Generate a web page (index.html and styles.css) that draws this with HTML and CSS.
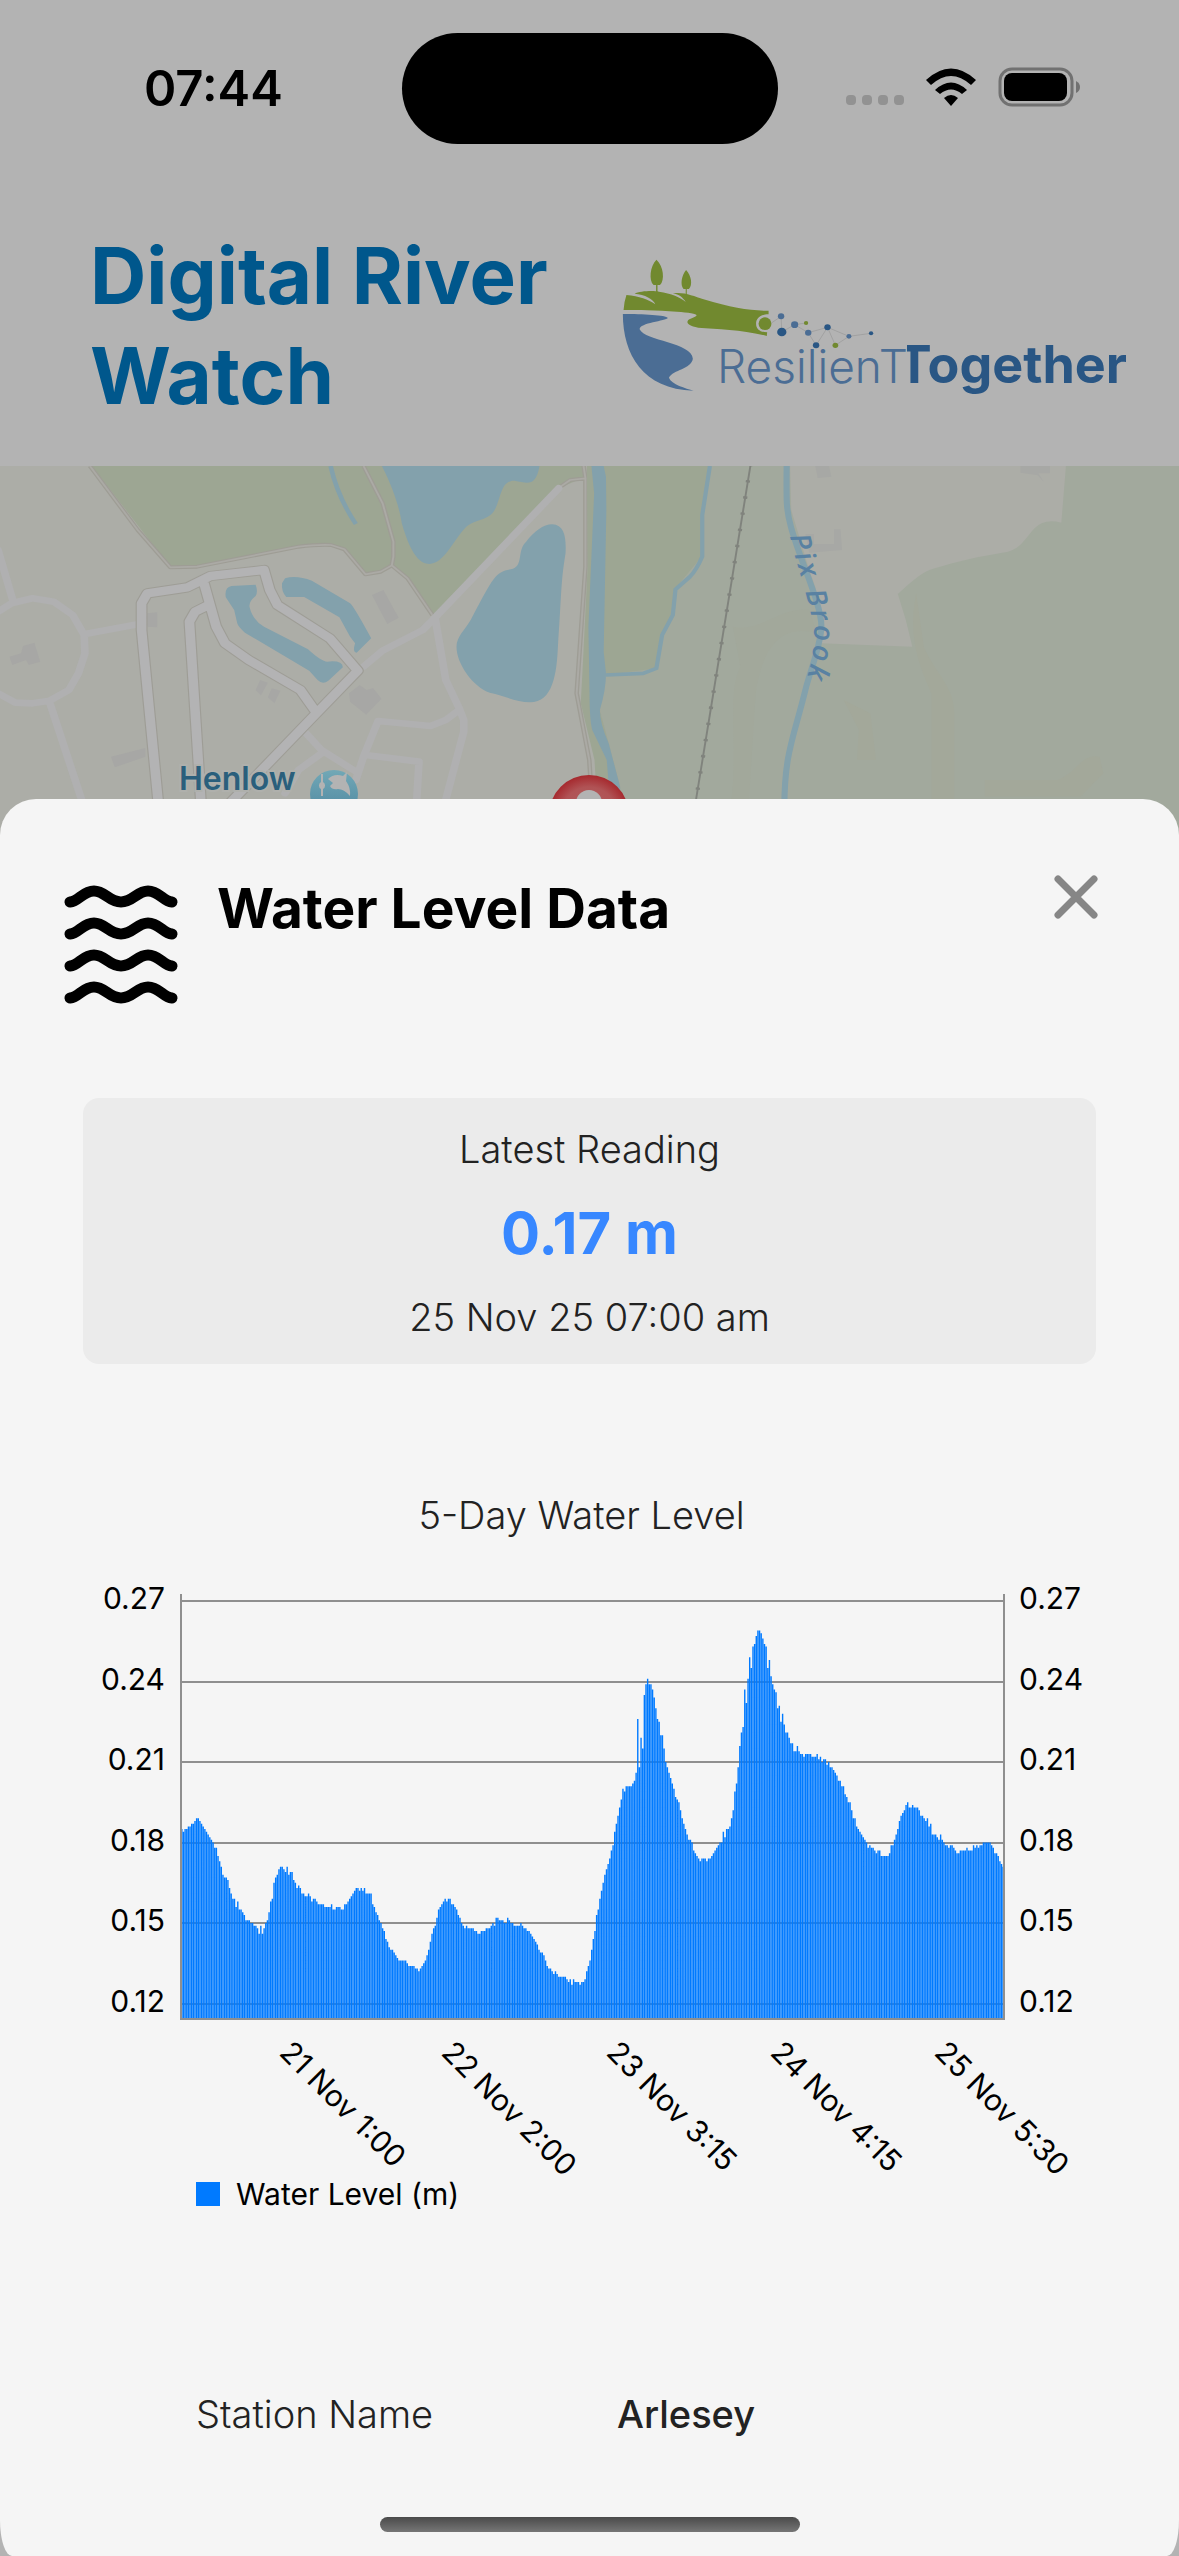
FILE: index.html
```html
<!DOCTYPE html>
<html lang="en">
<head>
<meta charset="utf-8">
<meta name="viewport" content="width=device-width, initial-scale=1">
<title>Digital River Watch</title>
<link rel="stylesheet" href="styles.css">
</head>
<body>
<div class="status">
  <span class="clock">07:44</span>
  <span class="island"></span>
  <svg class="status-icons" viewBox="0 0 240 44" role="img" aria-label="Wi-Fi connected, battery full">
    <g fill="#929292"><rect x="3" y="28" width="10" height="10" rx="4"/><rect x="19" y="28" width="10" height="10" rx="4"/><rect x="35" y="28" width="10" height="10" rx="4"/><rect x="51" y="28" width="10" height="10" rx="4"/></g>
    <path d="M83 13Q108-10 133 13L128 18Q108 0 88 18ZM92 23Q108 8 124 23L119 27Q108 18 97 27ZM101 31Q108 25 115 31L108 39Z" />
    <rect x="157" y="2" width="72" height="36" rx="12" fill="none" stroke="#717171" stroke-width="3"/>
    <rect x="161" y="6" width="63" height="28" rx="8"/>
    <path d="M233 14Q237 16 237 20Q237 24 233 26Z" fill="#717171"/>
  </svg>
</div>

<header class="header">
  <h1 class="title">Digital River Watch</h1>
  <svg class="logo" viewBox="0 0 560 190" role="img" aria-label="ResilienTogether">
    <clipPath id="join"><rect x="307" y="80" width="253" height="110"/></clipPath>
    <svg width="560" height="190" viewBox="0 0 1568 570" preserveAspectRatio="none">
      <g fill="#71892f">
        <path d="M158 86C178 105 182 148 168 162H161V186H157V162H150C136 148 140 105 158 86ZM241 117C256 133 260 163 249 174H243V190H240V174H234C224 163 228 133 241 117Z"/>
        <path d="M74 192C110 196 135 205 155 220C150 205 125 190 97 188C110 180 150 178 165 182C200 188 225 198 240 213C232 200 222 190 204 187C235 182 262 195 290 205C370 230 420 240 472 239V250C450 250 437 262 437 278C437 295 450 304 468 304L467 315C400 295 330 295 275 290C240 284 240 270 252 264C290 250 265 246 215 242C160 237 100 238 66 237Q68 210 74 192Z"/>
        <ellipse cx="462" cy="278" rx="18" ry="19"/>
      </g>
      <path d="M64 249C120 249 185 252 190 261C185 270 110 275 111 295C125 330 258 335 260 383C255 415 205 415 193 440C200 460 240 472 262 479C120 475 64 370 64 249Z" fill="#4b6d94"/>
      <path d="M480 276L507 256L509 303L545 281L577 276M545 281L583 305L605 343L637 289L659 343L697 316L637 289L583 305M697 316L759 307" fill="none" stroke="#999" stroke-width="2"/>
      <g fill="#4b6d94"><circle cx="507" cy="256" r="9"/><circle cx="545" cy="281" r="10"/><circle cx="583" cy="305" r="9"/><circle cx="697" cy="316" r="7"/></g>
      <g fill="#295684"><circle cx="509" cy="303" r="13"/><circle cx="605" cy="343" r="9"/><circle cx="637" cy="289" r="9"/><circle cx="759" cy="307" r="6"/></g>
      <g fill="#71892f"><circle cx="577" cy="276" r="6"/><circle cx="659" cy="343" r="8"/></g>
    </svg>
    <text class="logo-light" x="117" y="152">ResilienT</text>
    <text class="logo-bold" x="527" y="152" text-anchor="end" clip-path="url(#join)">Together</text>
  </svg>
</header>

<main class="main">
  <svg class="map" viewBox="0 0 1179 373" preserveAspectRatio="xMidYMin slice" role="img" aria-label="Map of Henlow and Pix Brook">
    <defs>
      <linearGradient id="poi" x1="0" y1="0" x2="0" y2="1"><stop offset="0" stop-color="#72a8b6"/><stop offset="1" stop-color="#4d87a0"/></linearGradient>
      <radialGradient id="pin"><stop offset="0" stop-color="#b26262"/><stop offset=".7" stop-color="#b05355"/><stop offset="1" stop-color="#a6292e"/></radialGradient>
    </defs>
    <rect width="1179" height="373" fill="#acada7"/>
    <svg width="600" height="354" viewBox="0 18 1568 1062" preserveAspectRatio="none" overflow="visible" fill="none" stroke-linejoin="round">
      <path d="M240 18L445 322L515 320L780 260Q830 253 865 255L900 268L955 343L995 335L1022 318L1065 355L1130 465L1460 85L1530 50V18Z" fill="#9da693"/>
      <g fill="#83a1ac">
        <path d="M998 18C1030 90 1045 150 1050 190C1075 290 1100 312 1122 312C1160 310 1180 250 1215 205C1240 175 1280 185 1295 145C1310 110 1310 60 1345 62C1380 70 1400 80 1410 18Z"/>
        <path d="M1443 193C1475 195 1480 230 1478 280C1465 370 1468 400 1458 560C1455 640 1445 727 1385 727C1350 727 1320 708 1280 698C1235 680 1193 610 1193 560C1193 530 1215 510 1230 480C1290 350 1295 335 1335 328C1370 320 1350 270 1375 245C1395 215 1420 193 1443 193Z"/>
        <path d="M605 378L668 374Q675 395 668 408Q650 425 652 440Q660 480 690 500L805 568Q840 605 855 605Q895 600 896 622L858 662Q843 675 830 660L808 632L640 518Q622 500 620 490L612 450L590 412Q586 382 605 378Z"/>
        <path d="M745 355Q775 345 815 362L915 430Q925 440 970 535L932 578Q920 578 928 550L915 530L887 472L795 411H748Q735 395 737 370Z"/>
      </g>
      <path d="M864 18Q882 110 930 192" stroke="#83a1ac" stroke-width="12"/>
      <g fill="#a7a7a5"><path d="M25 590L55 580L60 558L90 548L105 605L75 615L68 600L32 615ZM384 460L411 457V502L384 500ZM972 405L1002 390L1042 473L1012 492ZM290 890L380 864V890L300 922ZM912 700L940 675L958 690L975 684L997 716L957 764L915 725ZM680 660L700 668L682 706L668 690ZM710 685L733 692L717 730L700 712Z"/></g>
      <g stroke="#9e9d95" stroke-width="12">
        <path id="track" d="M235 18L360 210L445 322L515 320L780 260Q830 253 865 255L900 268L955 343L995 335L1024 316L1028 290V245L1000 130L950 18M1024 316L1065 355L1130 465M1465 80L1490 60L1530 55M1525 18L1530 55V320L1507 700L1540 900L1550 1080"/>
      </g>
      <use href="#track" stroke="#abaaa5" stroke-width="5"/>
      <g stroke="#b0b0b1" stroke-width="20" stroke-linecap="round">
        <path d="M-5 270L32 415M-5 455L30 430L85 415L140 425L190 465L220 525L222 580L205 640L180 690L130 722L85 730L40 728L-5 700M222 522L360 493M132 735L225 1060M1460 85L1135 475L1105 510L1000 572L950 620M1138 480L1165 660L1200 745L1212 780V815L1160 1040M1200 750L1165 780L1125 798L988 783L950 890L930 960M955 885L1095 905L1088 1040M800 820L840 870L930 935M840 880L780 930L745 1000"/>
      </g>
      <g stroke="#9e9d96" stroke-width="31">
        <path id="road" d="M418 1080L370 510V430L385 400L490 382L550 348L690 330L705 390L725 435L862 535L935 632L825 762L600 1030M533 370L565 500L588 550L650 600L785 690L825 755M540 438L510 455L495 485L528 1080"/>
      </g>
      <use href="#road" stroke="#b3b3b4" stroke-width="25"/>
    </svg>
    <svg x="580" width="599" height="354" viewBox="0 18 1568 1062" preserveAspectRatio="none" overflow="visible" fill="none">
      <path d="M60 18H1568V1150H110L105 1000L52 750Z" fill="#a2a99d"/>
      <path d="M18 18H62L68 645L52 750L105 980V1040H45L38 900L2 730L8 600L20 320ZM62 18H335L318 160V290L250 385L243 470L215 520L200 625L68 645Z" fill="#9da693"/>
      <path d="M400 500C470 520 520 440 600 450L620 520C500 480 470 620 460 700L440 1060H390C420 900 380 700 420 620Z" fill="#a2a89b"/>
      <path d="M880 400C860 520 880 600 920 700V1060H980V760C980 680 930 640 900 560ZM690 720L760 760L775 900H725L730 810ZM1250 960C1300 940 1310 880 1360 890L1370 940L1310 1010H1060V960Z" fill="#a3a89a"/>
      <path d="M550 18H1272L1260 188Q1215 175 1190 205C1165 235 1155 265 1120 275L1040 292Q940 318 905 335Q880 350 832 402Q855 480 870 560L630 550Q650 480 600 330L553 150Z" fill="#acada7"/>
      <g fill="#a7a8a5"><path d="M616 18H652L658 50L622 54ZM1153 18H1230V40H1200L1214 66L1198 46L1153 38ZM590 222H612V252H665V208H682L686 270L600 278Z"/></g>
      <path d="M30 18H62L68 50L69 150L62 575L68 640Q68 690 52 750Q52 790 75 850L105 980V1040H80L70 900L32 810Q25 780 25 700L22 500L37 100Z" fill="#83a1ac"/>
      <path d="M340 18L320 165V290Q305 330 288 350L250 388L243 465L215 525L200 625L165 640L68 645" stroke="#83a1ac" stroke-width="11"/>
      <path d="M446 18L295 1080" stroke="#80837d" stroke-width="5"/>
      <path d="M446 18L295 1080" stroke="#80837d" stroke-width="11" stroke-dasharray="7 42" stroke-dashoffset="6"/>
      <path d="M541 18C540 130 540 150 552 200C575 300 632 430 632 500C630 560 600 640 590 690C560 830 535 880 535 1040" stroke="#83a1ac" stroke-width="16"/>
    </svg>
    <path id="brook" d="M790 70C795 95 810 135 814 165C815 190 807 215 793 250" fill="none"/>
    <text class="brook-name"><textPath href="#brook">Pix Brook</textPath></text>
    <text class="place" x="179" y="324">Henlow</text>
    <circle cx="334" cy="328" r="24" fill="url(#poi)"/>
    <path d="M328 313Q334 307 343 310L347 306L346 315Q351 322 350 330Q344 323 338 323Q332 324 330 320L333 317ZM321 308H323V316A4 4 0 0 1 323 323V330H321V323A4 4 0 0 1 321 316Z" fill="#b3b3b3"/>
    <circle cx="589" cy="349" r="40" fill="url(#pin)"/>
    <circle cx="589" cy="337" r="13" fill="#b3b3b3"/>
  </svg>

  <section class="sheet" role="dialog" aria-labelledby="sheet-title">
    <div class="sheet-head">
      <svg class="waves" viewBox="0 0 114 120" aria-hidden="true">
        <path id="wave" d="M6 17C15 16 19 6 30 6S45 17 57 17S73 6 84 6S99 16 108 17"/>
        <use href="#wave" y="32"/><use href="#wave" y="64"/><use href="#wave" y="96"/>
      </svg>
      <h2 class="sheet-title" id="sheet-title">Water Level Data</h2>
      <button class="close" type="button" aria-label="Close">
        <svg viewBox="0 0 44 44" aria-hidden="true"><path d="M4 4L40 40M40 4L4 40"/></svg>
      </button>
    </div>

    <div class="reading">
      <p>Latest Reading</p>
      <p class="value">0.17 m</p>
      <p>25 Nov 25 07:00 am</p>
    </div>

    <h3 class="chart-title">5-Day Water Level</h3>
    <svg class="chart" viewBox="0 0 1013 604" role="img" aria-label="Bar chart of water level over five days">
      <g id="grid"></g>
      <path id="bars"></path>
      <path class="axis" d="M98 22V447H921V22"/>
      <g id="labels"></g>
    </svg>
    <p class="legend"><span class="swatch"></span>Water Level (m)</p>

    <dl class="station">
      <dt>Station Name</dt>
      <dd>Arlesey</dd>
    </dl>
    <div class="home"></div>
  </section>
</main>
<script src="chart.js"></script>
</body>
</html>
```
FILE: styles.css
```css
* { box-sizing: border-box; }

body {
  margin: 0;
  min-height: 100vh;
  display: flex;
  flex-direction: column;
  background: #b3b3b3;
  color: #222;
  font: 300 38px/48px "Inter", sans-serif;
}

h1, h2, h3, p, dl, dd { margin: 0; }

.status {
  display: grid;
  grid-template-columns: 1fr 376px 1fr;
  align-items: center;
  height: 177px;
}
.clock {
  padding-left: 144px;
  color: #000;
  font-size: 49px;
  font-weight: 600;
}
.island {
  height: 111px;
  border-radius: 56px;
  background: #000;
}
.status-icons {
  width: 240px;
  height: 44px;
  justify-self: end;
  margin-right: 96px;
}

.header {
  display: flex;
  align-items: center;
  padding: 49px 19px 40px 90px;
}
.title {
  flex: 1;
  color: #00578c;
  font-size: 78px;
  font-weight: 700;
  line-height: 100px;
}
.logo { width: 560px; flex: none; }
.logo-light { font-size: 46px; font-weight: 300; fill: #4b6d94; }
.logo-bold { font-size: 52px; font-weight: 700; fill: #295684; }

.main {
  flex: 1;
  display: flex;
  flex-direction: column;
}
.map {
  display: block;
  width: 100%;
  height: 373px;
}
.place {
  font-size: 32px;
  font-weight: 600;
  fill: #2a5f7c;
  stroke: #afb0ac;
  stroke-width: 4px;
  paint-order: stroke;
}
.brook-name {
  font: italic 600 28px "Open Sans", sans-serif;
  letter-spacing: 3px;
  fill: #5981a2;
}

.sheet {
  position: relative;
  flex: 1;
  display: flex;
  flex-direction: column;
  margin-top: -40px;
  padding: 76px 83px 24px;
  border-radius: 36px 36px 12px 12px / 36px 36px 36px 36px;
  background: #f5f5f5;
}
.sheet-head {
  display: flex;
  align-items: flex-start;
  margin: 0 -2px 0 -19px;
}
.waves {
  width: 114px;
  height: 120px;
  margin-top: 10px;
  fill: none;
  stroke: #000;
  stroke-width: 11px;
  stroke-linecap: round;
}
.sheet-title {
  flex: 1;
  padding-left: 39px;
  color: #000;
  font-size: 55px;
  font-weight: 700;
  line-height: 66px;
}
.close {
  width: 44px;
  height: 44px;
  padding: 0;
  border: 0;
  background: none;
}
.close svg {
  display: block;
  fill: none;
  stroke: #868686;
  stroke-width: 7px;
  stroke-linecap: round;
}

.reading {
  display: flex;
  flex-direction: column;
  gap: 20px;
  margin-top: 93px;
  padding: 27px 24px 23px;
  border-radius: 16px;
  background: #ebebeb;
  text-align: center;
}
.value {
  color: #3787ff;
  font-size: 58px;
  font-weight: 700;
  line-height: 80px;
}

.chart-title {
  margin-top: 127px;
  padding-right: 16px;
  font-size: 38px;
  font-weight: 300;
  text-align: center;
}
.chart {
  display: block;
  width: 100%;
  margin-top: 33px;
  overflow: visible;
  font-size: 30px;
  font-weight: 400;
  fill: #000;
}
.chart line, .axis { stroke: #8f8f8f; stroke-width: 2px; fill: none; }
#bars { fill: #007aff; }

.legend {
  display: flex;
  align-items: center;
  gap: 16px;
  padding-left: 113px;
  color: #000;
  font-size: 30px;
  font-weight: 400;
  line-height: 36px;
}
.swatch {
  width: 24px;
  height: 24px;
  background: #007aff;
}

.station {
  display: grid;
  grid-template-columns: 1fr 1fr;
  margin-top: 178px;
  padding: 0 58px 0 113px;
}
.station dd { font-weight: 500; }

.home {
  align-self: center;
  width: 420px;
  height: 15px;
  margin-top: auto;
  border-radius: 8px;
  background: linear-gradient(#4a4a4a, #767676);
}
```
FILE: chart.js
```js
// Readings every 15 minutes as [sample, level in mm]; samples between are interpolated.
const readings = [
  [0,185],[1,184],[3,185],[5,186],[7,187],[9,189],[11,188],[13,186],[15,184],[18,181],[20,178],[21,178],[22,175],
  [24,171],[25,168],[28,166],[29,163],[31,159],[32,159],[33,156],[34,158],[35,155],[37,154],[39,151],[43,150],
  [46,148],[47,146],[48,149],[49,146],[51,150],[52,151],[53,154],[54,158],[55,159],[56,165],[58,168],[60,171],
  [61,171],[63,169],[64,171],[65,168],[67,169],[68,166],[70,163],[71,164],[73,161],[76,160],[77,161],[79,158],
  [81,159],[83,157],[90,156],[91,157],[92,155],[95,156],[98,155],[99,157],[100,157],[103,160],[105,162],[106,163],
  [108,162],[109,163],[110,162],[111,163],[112,161],[115,161],[116,157],[118,154],[120,151],[123,147],[124,144],
  [126,141],[129,139],[132,136],[136,136],[137,135],[138,134],[141,134],[144,132],[146,134],[148,136],[150,140],
  [152,146],[154,149],[156,155],[158,157],[160,159],[161,158],[163,159],[164,157],[166,156],[168,153],[170,150],
  [172,148],[173,149],[174,148],[176,148],[178,147],[180,146],[183,147],[187,148],[189,150],[190,149],[191,152],
  [194,151],[197,150],[198,152],[200,150],[202,149],[205,149],[206,150],[208,148],[212,146],[215,143],[217,140],
  [220,138],[222,134],[225,132],[226,131],[227,132],[229,130],[233,130],[235,128],[236,129],[237,127],[238,129],
  [239,128],[241,128],[242,127],[244,128],[245,129],[246,132],[248,136],[250,144],[251,147],[252,153],[253,155],
  [255,162],[257,168],[260,174],[262,179],[263,184],[265,190],[267,196],[268,200],[269,199],[270,201],[273,201],
  [275,203],[276,206],[277,226],[278,208],[279,219],[280,215],[281,235],[282,239],[283,241],[284,239],[285,239],
  [286,237],[287,234],[288,230],[289,226],[290,225],[291,220],[292,220],[293,215],[294,210],[296,206],[298,202],
  [300,197],[302,195],[304,189],[306,185],[308,181],[310,180],[311,177],[313,175],[315,173],[317,174],[319,173],
  [321,174],[323,176],[325,178],[327,180],[328,180],[329,184],[330,182],[331,185],[332,185],[333,186],[334,189],
  [335,192],[336,199],[337,202],[338,208],[339,216],[340,221],[341,223],[342,237],[343,232],[344,241],[345,249],
  [346,245],[347,253],[348,254],[349,257],[350,259],[351,259],[352,258],[353,256],[354,254],[355,253],[356,245],
  [357,248],[358,242],[359,239],[360,237],[361,236],[362,230],[363,231],[364,225],[365,228],[366,224],[367,221],
  [368,221],[369,219],[370,217],[371,217],[372,214],[373,214],[374,216],[375,214],[376,213],[378,212],[379,213],
  [382,213],[383,212],[385,212],[386,213],[387,211],[388,212],[389,210],[391,211],[392,209],[393,210],[394,208],
  [396,207],[398,205],[399,203],[400,203],[401,201],[402,201],[403,198],[405,195],[406,195],[408,189],[409,189],
  [410,186],[412,184],[414,182],[416,180],[417,178],[418,179],[419,178],[421,177],[422,176],[424,177],[425,175],
  [429,175],[430,176],[431,179],[432,179],[433,181],[434,183],[435,185],[436,188],[437,190],[439,192],[441,195],
  [442,193],[443,193],[444,194],[445,193],[447,193],[449,190],[451,189],[452,188],[453,189],[454,186],[455,187],
  [456,183],[458,183],[460,181],[461,183],[462,181],[464,179],[466,178],[468,179],[470,177],[471,176],[472,176],
  [474,177],[476,177],[477,178],[478,177],[480,177],[481,179],[482,178],[483,179],[484,178],[486,179],[487,180],
  [490,180],[492,179],[494,176],[496,175],[497,173],[499,171]
];

const plot = { left: 98, right: 921, bottom: 447, gridTop: 29, gridStep: 80.5 };
const samples = 500;
const step = (plot.right - plot.left) / samples;
const yOf = mm => plot.gridTop + (270 - mm) * plot.gridStep / 30;

let path = "";
for (let k = 0; k < readings.length; k++) {
  const [a, from] = readings[k];
  const [b, to] = readings[k + 1] || [samples, from];
  for (let i = a; i < b; i++) {
    const level = Math.round(from + (to - from) * (i - a) / (b - a));
    const x = plot.left + i * step + step * 0.075;
    path += `M${x.toFixed(2)} ${plot.bottom}V${yOf(level).toFixed(2)}h${(step * 0.85).toFixed(2)}V${plot.bottom}Z`;
  }
}
document.getElementById("bars").setAttribute("d", path);

let grid = "", labels = "";
for (let mm = 270; mm >= 120; mm -= 30) {
  const y = Math.round(yOf(mm));
  const text = (mm / 1000).toFixed(2);
  grid += `<line x1="${plot.left}" x2="${plot.right}" y1="${y}" y2="${y}"/>`;
  labels += `<text x="82" y="${y + 8}" text-anchor="end">${text}</text><text x="936" y="${y + 8}">${text}</text>`;
}
[["21 Nov 1:00", 195], ["22 Nov 2:00", 357], ["23 Nov 3:15", 522], ["24 Nov 4:15", 686], ["25 Nov 5:30", 850]]
  .forEach(([text, x]) => { labels += `<text transform="translate(${x} 482) rotate(45)">${text}</text>`; });
document.getElementById("grid").innerHTML = grid;
document.getElementById("labels").innerHTML = labels;
```
